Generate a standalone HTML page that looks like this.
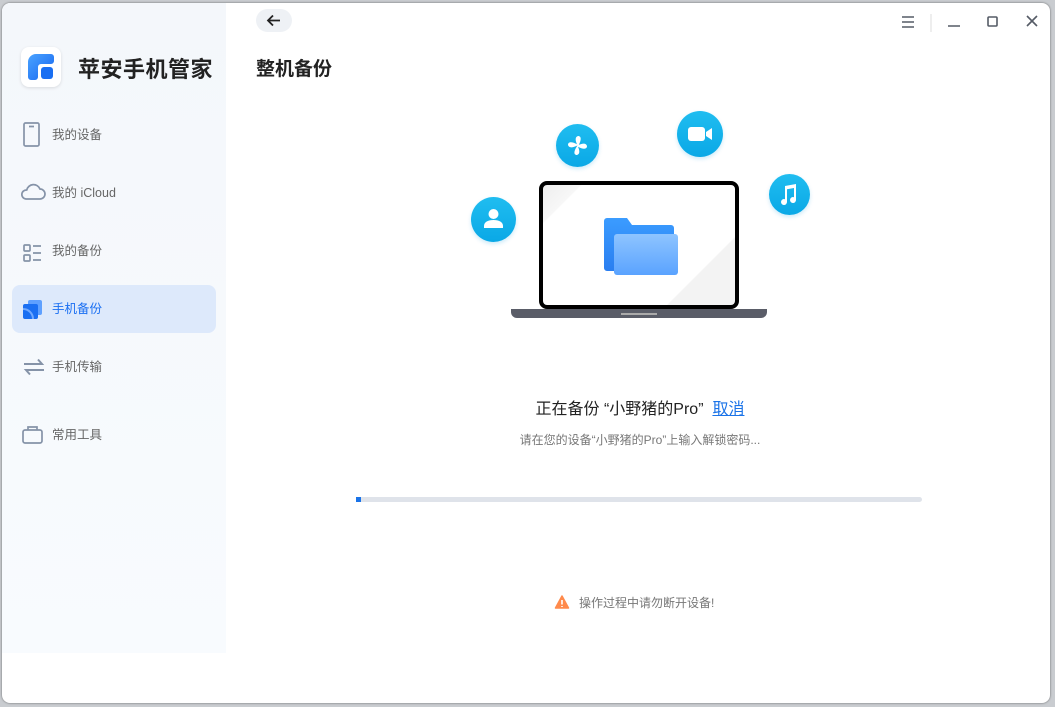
<!DOCTYPE html>
<html><head><meta charset="utf-8"><style>
*{margin:0;padding:0;box-sizing:border-box}
body{width:1055px;height:707px;overflow:hidden;background:#c9ccd0;font-family:"Liberation Sans","Noto Sans CJK SC",sans-serif;position:relative}
.win{position:absolute;left:2px;top:3px;width:1048px;height:700px;background:#fff;border-radius:8px;overflow:hidden;box-shadow:0 0 2px rgba(0,0,0,.5)}
.side{position:absolute;left:0;top:0;width:224px;height:650px;background:linear-gradient(#f4f7fb,#f8fbfe)}
.a{position:absolute}
.nav{position:absolute;left:50px;font-size:12.5px;color:#666;line-height:16px}
.circ{position:absolute;border-radius:50%;background:linear-gradient(#20bdf0,#0aa8e6);box-shadow:0 2px 4px rgba(0,150,220,.2)}
</style></head><body>
<div class="win">
<div class="side"></div>
<div class="a" style="left:19px;top:44px;width:40px;height:40px;background:#fff;border-radius:8px;box-shadow:0 1px 3px rgba(0,0,0,.12)">
<svg width="40" height="40" viewBox="0 0 40 40"><defs><linearGradient id="lg" x1="0" y1="0" x2="1" y2="1"><stop offset="0" stop-color="#4aa3ff"/><stop offset="1" stop-color="#1565f0"/></linearGradient></defs>
<path d="M7 30V15a8 8 0 0 1 8-8h15a3 3 0 0 1 3 3v4a3 3 0 0 1-3 3h-10a3 3 0 0 0-3 3v10a3 3 0 0 1-3 3h-4a3 3 0 0 1-3-3z" fill="url(#lg)"/>
<rect x="20" y="20" width="12" height="12" rx="3" fill="#1a6ff2"/></svg></div>
<div class="a" style="left:76px;top:49px;font-size:22px;font-weight:bold;color:#222;letter-spacing:0.5px">苹安手机管家</div>
<div class="a" style="left:10px;top:282px;width:204px;height:48px;background:#dde9fb;border-radius:8px"></div>
<svg class="a" style="left:17px;top:117px" width="26" height="30" viewBox="0 0 26 30" fill="none" stroke="#8593a8" stroke-width="1.7"><rect x="5" y="3" width="15" height="23" rx="1.5"/><path d="M10 6.5h5"/></svg>
<div class="nav" style="top:124px">我的设备</div>
<svg class="a" style="left:17px;top:178px" width="28" height="22" viewBox="0 0 28 22" fill="none" stroke="#8593a8" stroke-width="1.7"><path d="M7 18h14a5 5 0 0 0 0-10 7 7 0 0 0-13.3 1A4.5 4.5 0 0 0 7 18z"/></svg>
<div class="nav" style="top:182px">我的 iCloud</div>
<svg class="a" style="left:19px;top:238px" width="26" height="26" viewBox="0 0 26 26" fill="none" stroke="#8593a8" stroke-width="1.7"><rect x="3" y="4" width="6" height="6" rx="1"/><rect x="3" y="14" width="6" height="6" rx="1"/><path d="M12 5h8M12 12h8M12 19h8"/></svg>
<div class="nav" style="top:240px">我的备份</div>
<svg class="a" style="left:19px;top:295px" width="24" height="24" viewBox="0 0 24 24"><rect x="7" y="2" width="14" height="15" rx="2" fill="#5ea0ff"/><rect x="2" y="6" width="15" height="15" rx="2" fill="#1a6ff2"/><path d="M2 11a10 10 0 0 1 10 10" stroke="#6fa8ff" stroke-width="2" fill="none"/></svg>
<div class="nav" style="top:298px;color:#1a6ff2">手机备份</div>
<svg class="a" style="left:18px;top:352px" width="28" height="24" viewBox="0 0 28 24" fill="none" stroke="#8593a8" stroke-width="2"><path d="M4 9h18l-4-4.5M24 15H6l4 4.5"/></svg>
<div class="nav" style="top:356px">手机传输</div>
<svg class="a" style="left:18px;top:420px" width="26" height="24" viewBox="0 0 26 24" fill="none" stroke="#8593a8" stroke-width="1.7"><rect x="3" y="7" width="19" height="13" rx="2"/><path d="M8 7V4h9v3"/></svg>
<div class="nav" style="top:424px">常用工具</div>
<div class="a" style="left:254px;top:6px;width:36px;height:23px;background:#eef1f5;border-radius:12px"><svg width="36" height="23" viewBox="0 0 36 23" fill="none" stroke="#222" stroke-width="1.8"><path d="M24 11.5H12M17 6.5l-5 5 5 5"/></svg></div>
<div class="a" style="left:254px;top:51px;font-size:19px;font-weight:bold;color:#222">整机备份</div>
<svg class="a" style="left:896px;top:8px" width="150" height="22" viewBox="0 0 150 22" fill="none" stroke="#555b66" stroke-width="1.6"><path d="M4 6h12M4 11h12M4 16h12"/><path d="M33 3v18" stroke="#ddd" stroke-width="1"/><path d="M50 15h12"/><rect x="90" y="6" width="9" height="9" rx="1"/><path d="M129 5l10 10M139 5l-10 10"/></svg>
<div class="circ" style="left:469px;top:194px;width:45px;height:45px"><svg width="45" height="45" viewBox="0 0 45 45" fill="#fff"><circle cx="22.5" cy="17" r="5"/><path d="M13 29c0-4 4-6 9.5-6s9.5 2 9.5 6v2H13z"/></svg></div>
<div class="circ" style="left:554px;top:121px;width:43px;height:43px"><svg width="43" height="43" viewBox="0 0 43 43" fill="#fff"><path d="M21.5 21.5C19 16 19 13 22 12c3 0 4 3 .5 9.5zM21.5 21.5c5.5-2.5 8.5-2.5 9.5.5 0 3-3 4-9.5.5zM21.5 21.5c2.5 5.5 2.5 8.5-.5 9.5-3 0-4-3 .5-9.5zM21.5 21.5c-5.5 2.5-8.5 2.5-9.5-.5 0-3 3-4 9.5-.5z"/></svg></div>
<div class="circ" style="left:675px;top:108px;width:46px;height:46px"><svg width="46" height="46" viewBox="0 0 46 46" fill="#fff"><rect x="11" y="16" width="17" height="14" rx="3"/><path d="M29 21l6-4v12l-6-4z"/></svg></div>
<div class="circ" style="left:767px;top:171px;width:41px;height:41px"><svg width="41" height="41" viewBox="0 0 41 41" fill="#fff"><path d="M16 12l11-2v16a3 3 0 1 1-2-2.8V14l-7 1.3V28a3 3 0 1 1-2-2.8z"/></svg></div>
<div class="a" style="left:537px;top:178px;width:200px;height:128px;border:4px solid #000;border-radius:8px;background:linear-gradient(135deg,#eee 0,#f7f7f7 12%,#fff 12.5%,#fff 78%,#f3f3f3 78.5%)"></div>
<svg class="a" style="left:509px;top:306px" width="256" height="12" viewBox="0 0 256 12"><path d="M0 0h256v3a6 6 0 0 1-6 6H6a6 6 0 0 1-6-6z" fill="#5a5d68"/><rect x="110" y="4" width="36" height="2" fill="#aaa"/></svg>
<svg class="a" style="left:602px;top:215px" width="74" height="57" viewBox="0 0 74 57"><defs><linearGradient id="f1" x1="0" y1="0" x2="0" y2="1"><stop offset="0" stop-color="#3b9cff"/><stop offset="1" stop-color="#2a7ef0"/></linearGradient><linearGradient id="f2" x1="0" y1="0" x2="0" y2="1"><stop offset="0" stop-color="#8ec4ff"/><stop offset="1" stop-color="#5aa3ff"/></linearGradient></defs><path d="M3 0h20l5 7h39a3 3 0 0 1 3 3v43H3a3 3 0 0 1-3-3V3a3 3 0 0 1 3-3z" fill="url(#f1)"/><rect x="10" y="16" width="64" height="41" rx="3" fill="url(#f2)"/></svg>
<div class="a" style="left:0;width:1276px;top:392px;text-align:center;font-size:16px;color:#222">正在备份 “小野猪的Pro” &nbsp;<span style="color:#1a73e8;text-decoration:underline">取消</span></div>
<div class="a" style="left:0;width:1276px;top:428px;text-align:center;font-size:12px;color:#777">请在您的设备“小野猪的Pro”上输入解锁密码...</div>
<div class="a" style="left:354px;top:494px;width:566px;height:5px;background:#dfe3ea;border-radius:3px"><div style="width:5px;height:5px;background:#1a73e8"></div></div>
<svg class="a" style="left:552px;top:591px" width="16" height="16" viewBox="0 0 16 16"><path d="M8 2l6.5 12h-13z" fill="#ff8a4c" stroke="#ff8a4c" stroke-linejoin="round" stroke-width="1.5"/><path d="M8 6v4.5M8 12v1" stroke="#fff" stroke-width="1.6"/></svg>
<div class="a" style="left:577px;top:591px;font-size:12px;color:#777">操作过程中请勿断开设备!</div>
</div>
</body></html>
